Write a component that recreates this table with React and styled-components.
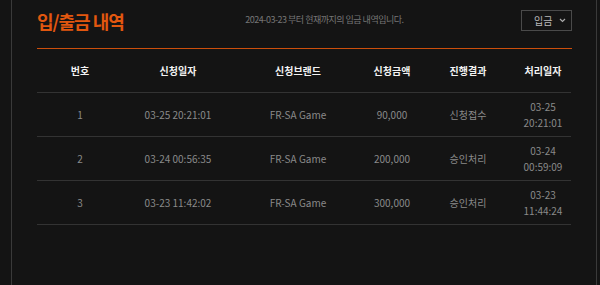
import React from 'react';
import styled, { createGlobalStyle } from 'styled-components';

const GlobalStyle = createGlobalStyle`
  body {
    margin: 0;
    background: #141414;
    font-family: "Noto Sans CJK KR", "Noto Sans", sans-serif;
  }
`;

const rows = [
  { no: 1, date: '03-25 20:21:01', brand: 'FR-SA Game', amount: '90,000', status: '신청접수', done: '03-25 20:21:01' },
  { no: 2, date: '03-24 00:56:35', brand: 'FR-SA Game', amount: '200,000', status: '승인처리', done: '03-24 00:59:09' },
  { no: 3, date: '03-23 11:42:02', brand: 'FR-SA Game', amount: '300,000', status: '승인처리', done: '03-23 11:44:24' },
];

const heads = ['번호', '신청일자', '신청브랜드', '신청금액', '진행결과', '처리일자'];

const Frame = styled.div`
  margin: 0 3px 0 11px;
  height: 285px;
  box-sizing: border-box;
  border-left: 1px solid #3a3a3a;
  border-right: 1px solid #3a3a3a;
  padding: 0 24px 0 25px;
`;

const Header = styled.div`
  display: flex;
  align-items: flex-start;
  height: 49px;
  box-sizing: border-box;
  padding-top: 10px;
  border-bottom: 1px solid #cc4f0c;
`;

const Title = styled.h2`
  margin: 0;
  font-size: 18px;
  font-weight: 700;
  letter-spacing: -1px;
  line-height: 22px;
  color: #e2570f;
`;

const Note = styled.div`
  flex: 1;
  text-align: center;
  font-size: 9px;
  line-height: 20px;
  color: #767676;
  letter-spacing: -0.5px;
  padding-left: 4px;
`;

const Select = styled.div`
  width: 51px;
  height: 21px;
  box-sizing: border-box;
  border: 1px solid #4a4a4a;
  display: flex;
  align-items: center;
  justify-content: space-between;
  padding: 0 5px 0 12px;
  font-size: 10px;
  color: #b8b8b8;
`;

const Grid = styled.div`
  display: grid;
  grid-template-columns: 86px 110px 130px 58px 94px 56px;
`;

const Cell = styled.div`
  height: 43px;
  border-bottom: 1px solid #333;
  display: flex;
  align-items: center;
  justify-content: center;
  text-align: center;
  font-size: 10px;
  font-weight: ${p => (p.$head ? 700 : 400)};
  color: ${p => (p.$head ? '#f2f2f2' : '#8a8a8a')};
  line-height: 16px;
`;

export default function App() {
  return (
    <>
      <GlobalStyle />
      <Frame>
        <Header>
          <Title>입/출금 내역</Title>
          <Note>2024-03-23 부터 현재까지의 입금 내역입니다.</Note>
          <Select>
            <span>입금</span>
            <svg width="7" height="5" viewBox="0 0 7 5">
              <path d="M1 1 L3.5 3.5 L6 1" fill="none" stroke="#aaa" strokeWidth="1.2" />
            </svg>
          </Select>
        </Header>
        <Grid>
          {heads.map(h => (
            <Cell key={h} $head>{h}</Cell>
          ))}
          {rows.map(r => (
            <React.Fragment key={r.no}>
              <Cell>{r.no}</Cell>
              <Cell>{r.date}</Cell>
              <Cell>{r.brand}</Cell>
              <Cell>{r.amount}</Cell>
              <Cell>{r.status}</Cell>
              <Cell>{r.done}</Cell>
            </React.Fragment>
          ))}
        </Grid>
      </Frame>
    </>
  );
}
